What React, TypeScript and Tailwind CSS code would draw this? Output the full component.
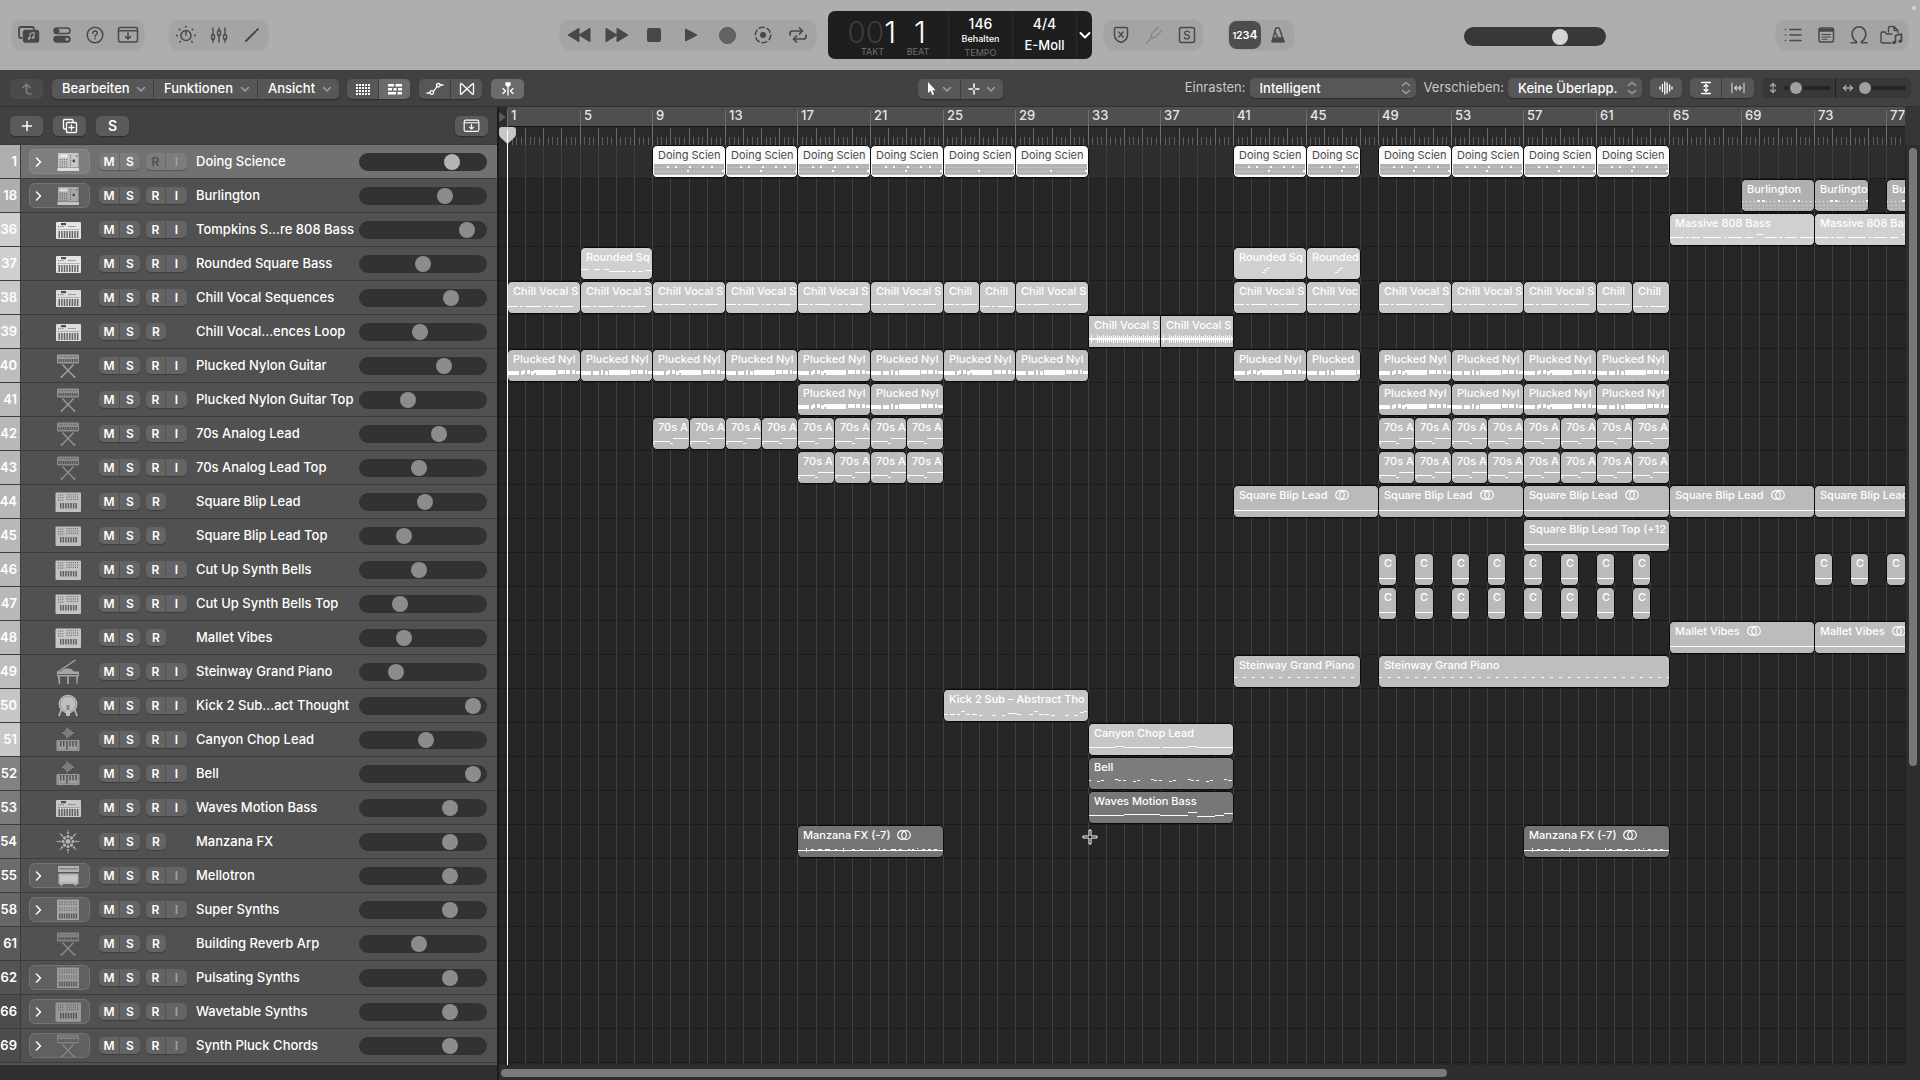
import React, { useState } from "react";

/* ---------- geometry of the time axis ---------- */

const BAR = 18.15;
const ORIGIN = 8;
const LAST_BAR = 78;
const barX = (bar: number) => Math.round(ORIGIN + (bar - 1) * BAR);

/* ---------- data ---------- */

type IconKind =
  | "mpc" | "keys" | "stand" | "synth" | "piano" | "kick"
  | "sampler" | "burst" | "mellotron" | "modular";

type Kind =
  | "drums" | "dots" | "massive" | "rounded" | "roundedUp" | "chill" | "chillLow"
  | "wave" | "pluck" | "seventies" | "line" | "piano" | "kick" | "canyon"
  | "bell" | "waves" | "fx";

type Region = { from: number; to: number; name: string; kind: Kind; stereo?: boolean };

type Track = {
  no: number; name: string; icon: IconKind; level: number;
  strip: string; tint: string; region: string;
  folder?: boolean; input?: "on" | "dim"; regions: Region[];
};

const run = (starts: number[], len: number, name: string, kind: Kind, stereo = false): Region[] =>
  starts.map((s) => ({ from: s, to: s + len, name, kind, stereo }));

const evens = (from: number, to: number) => {
  const out: number[] = [];
  for (let b = from; b <= to; b += 2) out.push(b);
  return out;
};

const TRACKS: Track[] = [
  { no: 1, name: "Doing Science", icon: "mpc", level: 85, strip: "bg-[#afafaf]", tint: "text-[#dedede]", region: "bg-[#fafafa] text-[#4a4a4a]", folder: true, input: "dim",
    regions: [...run([9, 13, 17, 21, 25, 29, 41], 4, "Doing Scien", "drums"), ...run([45], 3, "Doing Sc", "drums"), ...run([49, 53, 57, 61], 4, "Doing Scien", "drums")] },
  { no: 18, name: "Burlington", icon: "mpc", level: 78, strip: "bg-[#aeaeae]", tint: "text-[#c2c2c2]", region: "bg-[#b0b0b0] text-white", folder: true, input: "on",
    regions: [...run([69], 4, "Burlington", "dots"), ...run([73], 3, "Burlingto", "dots"), ...run([77], 4, "Burlington", "dots")] },
  { no: 36, name: "Tompkins S...re 808 Bass", icon: "keys", level: 100, strip: "bg-[#cfcfcf]", tint: "text-[#e4e4e4]", region: "bg-[#d0d0d0] text-white", input: "on",
    regions: run([65, 73], 8, "Massive 808 Bass", "massive") },
  { no: 37, name: "Rounded Square Bass", icon: "keys", level: 56, strip: "bg-[#cfcfcf]", tint: "text-[#e4e4e4]", region: "bg-[#d0d0d0] text-white", input: "on",
    regions: [...run([5], 4, "Rounded Sq", "rounded"), ...run([41], 4, "Rounded Sq", "roundedUp"), ...run([45], 3, "Rounded", "roundedUp")] },
  { no: 38, name: "Chill Vocal Sequences", icon: "keys", level: 84, strip: "bg-[#c8c8c8]", tint: "text-[#dcdcdc]", region: "bg-[#c8c8c8] text-white", input: "on",
    regions: [...run([1, 5], 4, "Chill Vocal S", "chillLow"), ...run([9, 13, 17, 21], 4, "Chill Vocal S", "chill"), ...run([25], 2, "Chill", "chill"), ...run([27], 2, "Chill", "chillLow"), ...run([29, 41], 4, "Chill Vocal S", "chill"), ...run([45], 3, "Chill Voc", "chill"), ...run([49, 53, 57], 4, "Chill Vocal S", "chill"), ...run([61], 2, "Chill", "chill"), ...run([63], 2, "Chill", "chillLow")] },
  { no: 39, name: "Chill Vocal...ences Loop", icon: "keys", level: 53, strip: "bg-[#c4c4c4]", tint: "text-[#dcdcdc]", region: "bg-[#c6c6c6] text-white",
    regions: run([33, 37], 4, "Chill Vocal S", "wave") },
  { no: 40, name: "Plucked Nylon Guitar", icon: "stand", level: 77, strip: "bg-[#bdbdbd]", tint: "text-[#a2a2a2]", region: "bg-[#bebebe] text-white", input: "on",
    regions: [...run([1, 5, 9, 13, 17, 21, 25, 29, 41], 4, "Plucked Nyl", "pluck"), ...run([45], 3, "Plucked", "pluck"), ...run([49, 53, 57, 61], 4, "Plucked Nyl", "pluck")] },
  { no: 41, name: "Plucked Nylon Guitar Top", icon: "stand", level: 41, strip: "bg-[#bababa]", tint: "text-[#989898]", region: "bg-[#bcbcbc] text-white", input: "on",
    regions: run([17, 21, 49, 53, 57, 61], 4, "Plucked Nyl", "pluck") },
  { no: 42, name: "70s Analog Lead", icon: "stand", level: 72, strip: "bg-[#b8b8b8]", tint: "text-[#949494]", region: "bg-[#bcbcbc] text-white", input: "on",
    regions: [...run(evens(9, 23), 2, "70s A", "seventies"), ...run(evens(49, 63), 2, "70s A", "seventies")] },
  { no: 43, name: "70s Analog Lead Top", icon: "stand", level: 52, strip: "bg-[#b8b8b8]", tint: "text-[#8e8e8e]", region: "bg-[#bcbcbc] text-white", input: "on",
    regions: [...run(evens(17, 23), 2, "70s A", "seventies"), ...run(evens(49, 63), 2, "70s A", "seventies")] },
  { no: 44, name: "Square Blip Lead", icon: "synth", level: 58, strip: "bg-[#b8b8b8]", tint: "text-[#c0c0c0]", region: "bg-[#bababa] text-white",
    regions: run([41, 49, 57, 65, 73], 8, "Square Blip Lead", "line", true) },
  { no: 45, name: "Square Blip Lead Top", icon: "synth", level: 37, strip: "bg-[#b8b8b8]", tint: "text-[#bebebe]", region: "bg-[#bcbcbc] text-white",
    regions: run([57], 8, "Square Blip Lead Top (+12", "line") },
  { no: 46, name: "Cut Up Synth Bells", icon: "synth", level: 52, strip: "bg-[#b8b8b8]", tint: "text-[#c2c2c2]", region: "bg-[#bababa] text-white", input: "on",
    regions: [...run(evens(49, 63), 1, "C", "line"), ...run([73, 75, 77], 1, "C", "line")] },
  { no: 47, name: "Cut Up Synth Bells Top", icon: "synth", level: 33, strip: "bg-[#b9b9b9]", tint: "text-[#c2c2c2]", region: "bg-[#bababa] text-white", input: "on",
    regions: run(evens(49, 63), 1, "C", "line") },
  { no: 48, name: "Mallet Vibes", icon: "synth", level: 37, strip: "bg-[#bababa]", tint: "text-[#c6c6c6]", region: "bg-[#bcbcbc] text-white",
    regions: run([65, 73], 8, "Mallet Vibes", "line", true) },
  { no: 49, name: "Steinway Grand Piano", icon: "piano", level: 29, strip: "bg-[#bebebe]", tint: "text-[#a6a6a6]", region: "bg-[#bebebe] text-white", input: "on",
    regions: [...run([41], 7, "Steinway Grand Piano", "piano"), ...run([49], 16, "Steinway Grand Piano", "piano")] },
  { no: 50, name: "Kick 2 Sub...act Thought", icon: "kick", level: 106, strip: "bg-[#c6c6c6]", tint: "text-[#c0c0c0]", region: "bg-[#c4c4c4] text-white", input: "on",
    regions: run([25], 8, "Kick 2 Sub – Abstract Tho", "kick") },
  { no: 51, name: "Canyon Chop Lead", icon: "sampler", level: 59, strip: "bg-[#c8c8c8]", tint: "text-[#a0a0a0]", region: "bg-[#c6c6c6] text-white", input: "on",
    regions: run([33], 8, "Canyon Chop Lead", "canyon") },
  { no: 52, name: "Bell", icon: "sampler", level: 106, strip: "bg-[#828282]", tint: "text-[#a0a0a0]", region: "bg-[#7c7c7c] text-white", input: "on",
    regions: run([33], 8, "Bell", "bell") },
  { no: 53, name: "Waves Motion Bass", icon: "keys", level: 83, strip: "bg-[#7c7c7c]", tint: "text-[#c8c8c8]", region: "bg-[#777777] text-white", input: "on",
    regions: run([33], 8, "Waves Motion Bass", "waves") },
  { no: 54, name: "Manzana FX", icon: "burst", level: 83, strip: "bg-[#737373]", tint: "text-[#b4b4b4]", region: "bg-[#747474] text-white",
    regions: run([17, 57], 8, "Manzana FX (-7)", "fx", true) },
  { no: 55, name: "Mellotron", icon: "mellotron", level: 83, strip: "bg-[#6c6c6c]", tint: "text-[#b4b4b4]", region: "", folder: true, input: "dim", regions: [] },
  { no: 58, name: "Super Synths", icon: "modular", level: 83, strip: "bg-[#676767]", tint: "text-[#a4a4a4]", region: "", folder: true, input: "dim", regions: [] },
  { no: 61, name: "Building Reverb Arp", icon: "stand", level: 52, strip: "bg-[#5a5a5a]", tint: "text-[#8a8a8a]", region: "", regions: [] },
  { no: 62, name: "Pulsating Synths", icon: "modular", level: 83, strip: "bg-[#545454]", tint: "text-[#9a9a9a]", region: "", folder: true, input: "dim", regions: [] },
  { no: 66, name: "Wavetable Synths", icon: "synth", level: 83, strip: "bg-[#4c4c4c]", tint: "text-[#989898]", region: "", folder: true, input: "dim", regions: [] },
  { no: 69, name: "Synth Pluck Chords", icon: "stand", level: 83, strip: "bg-[#4c4c4c]", tint: "text-[#848484]", region: "", folder: true, input: "dim", regions: [] },
];

/* ---------- instrument icons ---------- */

const DARK = "#4d4d4d";

function BlackKeys({ x, y, w, h, n }: { x: number; y: number; w: number; h: number; n: number }) {
  return (
    <>
      {Array.from({ length: n }, (_, i) => (
        <rect key={i} x={x + (i * w) / n} y={y} width={1.5} height={h} fill={DARK} opacity={0.85} />
      ))}
    </>
  );
}

function KnobGrid({ x, y, cols, rows, dx, dy }: { x: number; y: number; cols: number; rows: number; dx: number; dy: number }) {
  return (
    <>
      {Array.from({ length: cols * rows }, (_, i) => (
        <rect key={i} x={x + (i % cols) * dx} y={y + Math.floor(i / cols) * dy} width={1.1} height={1.2} fill={DARK} opacity={0.65} />
      ))}
    </>
  );
}

function InstrumentIcon({ kind }: { kind: IconKind }) {
  return (
    <svg viewBox="0 0 28 26" width={28} height={26} fill="currentColor" className="shrink-0" aria-hidden="true">
      {kind === "mpc" && (
        <>
          <rect x={4} y={4} width={20.5} height={14.5} rx={0.5} opacity={0.75} />
          <rect x={3.5} y={19} width={21.5} height={3} />
          <rect x={5.5} y={5.5} width={8} height={3} fill="#fff" opacity={0.6} />
          <KnobGrid x={5.5} y={10} cols={4} rows={4} dx={2.2} dy={2.2} />
          <KnobGrid x={16} y={6} cols={1} rows={5} dx={2} dy={2.4} />
          <circle cx={19.8} cy={12} r={1.4} fill={DARK} />
          <circle cx={22.6} cy={7} r={0.7} fill={DARK} />
        </>
      )}
      {kind === "keys" && (
        <>
          <rect x={2} y={5} width={25} height={17} rx={1} />
          <rect x={7} y={6} width={5} height={2.2} fill={DARK} />
          <KnobGrid x={4} y={9} cols={3} rows={1} dx={2.2} dy={2.2} />
          <rect x={14} y={9} width={8} height={0.9} fill={DARK} opacity={0.5} />
          <rect x={3.5} y={12} width={22} height={0.6} fill={DARK} opacity={0.5} />
          <BlackKeys x={4.5} y={14} w={21} h={7} n={8} />
        </>
      )}
      {kind === "stand" && (
        <>
          <rect x={3} y={1.5} width={22} height={9} rx={1} opacity={0.9} />
          <KnobGrid x={5} y={3} cols={8} rows={1} dx={2.4} dy={2} />
          <BlackKeys x={4.5} y={6} w={20} h={3} n={9} />
          <path d="M8.500 11.500 14 17.500l5.500-6M14 17.500 7.500 24M14 17.500l6.500 6.500" stroke="currentColor" strokeWidth={1.4} fill="none" />
          <rect x={6.5} y={23} width={2.5} height={1.5} />
          <rect x={19} y={23} width={2.5} height={1.5} />
        </>
      )}
      {kind === "synth" && (
        <>
          <rect x={1.5} y={3.5} width={25.5} height={19.5} rx={1} />
          <KnobGrid x={4} y={5.5} cols={3} rows={3} dx={2.1} dy={2.5} />
          <KnobGrid x={12.5} y={5} cols={6} rows={3} dx={2.1} dy={2.4} />
          <BlackKeys x={6} y={14} w={18} h={5.5} n={7} />
        </>
      )}
      {kind === "piano" && (
        <>
          <path d="M3 13.5 21.5 1" stroke="currentColor" strokeWidth={1.4} fill="none" />
          <path d="M7 12.5C9 10 11 9.5 14 9.5s5 1 5.500 3h5.500v5H3v-5z" />
          <rect x={4} y={15} width={20} height={0.8} fill={DARK} />
          <path d="M4 17.500h2v7.500H4.700zM13.200 17.500h1.800V25h-1.800zM22 17.500h2L23.500 25h-1z" />
        </>
      )}
      {kind === "kick" && (
        <>
          <circle cx={14} cy={11} r={9.3} />
          <path d="M7.500 16 5 23M20.500 16l2.500 7" stroke="currentColor" strokeWidth={1.600} />
          <circle cx={14} cy={11} r={7.8} fill="none" stroke={DARK} strokeWidth={0.6} opacity={0.6} />
          <rect x={12.500} y={12} width={3} height={7} fill={DARK} opacity={0.5} />
          <rect x={12} y={17} width={4} height={6} rx={1} />
        </>
      )}
      {kind === "sampler" && (
        <>
          <path d="M9 5v2M11 3.500v5M13 .5v11M15 2v8M17 3.500v5M19 5v2" stroke="currentColor" strokeWidth={1.100} />
          <rect x={2.500} y={13} width={23} height={11} rx={1} />
          <path d="M4 14.200h20v8.600H4z" fill="none" stroke={DARK} strokeWidth={0.5} opacity={0.6} />
          <path d="M6.700 14v5.500M9.700 14v5.500M13 14v8.500M16 14v5.500M19 14v5.500M22 14v5.500" stroke={DARK} strokeWidth={1.400} />
        </>
      )}
      {kind === "burst" && (
        <>
          <circle cx={14} cy={12.500} r={2.400} />
          {Array.from({ length: 8 }, (_, i) => (
            <g key={i} transform={`rotate(${i * 45} 14 12.500)`}>
              <circle cx={14} cy={7.500} r={1.600} />
              <circle cx={14} cy={4} r={1.100} />
              <circle cx={14} cy={1.700} r={0.700} />
            </g>
          ))}
        </>
      )}
      {kind === "mellotron" && (
        <>
          <path d="M4 3h21v6H4zM4.500 10h20v11H23l-.5 1.500h-2L20 21H9l-.5 1.500h-2L6 21H4.500z" />
          <rect x={5} y={5.300} width={19} height={1} fill={DARK} opacity={0.7} />
          <rect x={4} y={9} width={21} height={2} fill={DARK} opacity={0.45} />
          <rect x={6} y={12.500} width={17} height={6} fill="#fff" opacity={0.25} />
        </>
      )}
      {kind === "modular" && (
        <>
          <rect x={3} y={2.500} width={22} height={20.500} rx={0.500} />
          <KnobGrid x={5} y={4.500} cols={8} rows={2} dx={2.400} dy={2.200} />
          <KnobGrid x={5} y={10.500} cols={8} rows={2} dx={2.400} dy={2.200} />
          <BlackKeys x={5} y={16.500} w={19} h={5} n={8} />
        </>
      )}
    </svg>
  );
}

/* ---------- small shared pieces ---------- */

function Svg({ w = 20, h = 20, children, sw = 1.5 }: { w?: number; h?: number; children: React.ReactNode; sw?: number }) {
  return (
    <svg viewBox={`0 0 ${w} ${h}`} width={w} height={h} fill="none" stroke="currentColor" strokeWidth={sw} strokeLinecap="round" strokeLinejoin="round" aria-hidden="true">
      {children}
    </svg>
  );
}

function Chevron() {
  return (
    <Svg w={10} h={10}>
      <path d="M1.500 3.500 5 7l3.500-3.500" />
    </Svg>
  );
}

const GROUP = "flex h-[30px] items-center rounded-[10px] bg-[#a4a4a4] text-[#484848] shadow-[0_0_0_1px_#a9a9a9]";

function TopButton({ label, children, dim }: { label: string; children: React.ReactNode; dim?: boolean }) {
  return (
    <button type="button" aria-label={label} className={`flex h-full w-[33px] items-center justify-center ${dim ? "text-[#8a8a8a]" : ""}`}>
      {children}
    </button>
  );
}

function InboxIcon({ w = 22 }: { w?: number }) {
  return (
    <svg viewBox="0 0 22 18" width={w} height={(w * 18) / 22} fill="none" stroke="currentColor" strokeWidth={1.5} strokeLinecap="round" strokeLinejoin="round" aria-hidden="true">
      <rect x={1.500} y={1.500} width={19} height={14.500} rx={2} />
      <path d="M2 4.800h18M11 6.800v6M8.500 10.500l2.500 2.500 2.500-2.500" />
    </svg>
  );
}

/* ---------- control bar ---------- */

const TRANSPORT = [
  { label: "Zurückspulen", width: "w-[38px]", icon: <svg viewBox="0 0 24 16" width={24} height={16} fill="currentColor"><path d="M12 1.200v13.600L1 8zM23 1.200v13.600L12 8z" stroke="currentColor" strokeLinejoin="round" /></svg> },
  { label: "Vorspulen", width: "w-[38px]", icon: <svg viewBox="0 0 24 16" width={24} height={16} fill="currentColor"><path d="M12 1.200v13.600L23 8zM1 1.200v13.600L12 8z" stroke="currentColor" strokeLinejoin="round" /></svg> },
  { label: "Stopp", width: "w-9", icon: <span className="size-3.5 rounded-[2px] bg-current" /> },
  { label: "Wiedergabe", width: "w-[38px]", icon: <svg viewBox="0 0 14 14" width={14} height={14} fill="currentColor"><path d="M1.500 1v12L13 7z" stroke="currentColor" strokeLinejoin="round" /></svg> },
  { label: "Aufnahme", width: "w-[35px]", icon: <span className="size-[17px] rounded-full border border-[#565656] bg-[#646464]" /> },
  { label: "Aufnahme erfassen", width: "w-[35px]", icon: <Svg w={18} h={18}><circle cx={9} cy={9} r={7.700} strokeDasharray="5 3.060" /><circle cx={9} cy={9} r={3} fill="currentColor" stroke="none" /></Svg> },
  { label: "Cycle", width: "w-[35px]", icon: <Svg w={20} h={18} sw={1.700}><path d="M2 9V7.500Q2 5 4.500 5H14M11.500 2l3 3-3 3M18 9v1.500Q18 13 15.500 13H6M8.500 10l-3 3 3 3" /></Svg> },
];

function Transport() {
  return (
    <div className={`${GROUP} w-[256px]`}>
      {TRANSPORT.map(({ label, width, icon }) => (
        <button type="button" key={label} aria-label={label} className={`flex h-full items-center justify-center ${width}`}>
          {icon}
        </button>
      ))}
    </div>
  );
}

function Display() {
  return (
    <div className="flex h-12 w-[264px] overflow-hidden rounded-[7px] bg-[#1e1e1e] text-white">
      <div className="flex w-[120px] justify-end gap-2 pr-4 pt-1.5">
        <div className="flex w-[54px] flex-col items-end">
          <span className="text-[30px] font-light leading-[30px]"><span className="text-[#3c3c3c]">00</span>1</span>
          <span className="pr-3 text-[9px] leading-[10px] text-[#6e6e6e]">TAKT</span>
        </div>
        <div className="flex w-7 flex-col items-center">
          <span className="pl-1 text-[30px] font-light leading-[30px]">1</span>
          <span className="text-[9px] leading-[10px] text-[#6e6e6e]">BEAT</span>
        </div>
      </div>
      <div className="flex w-16 flex-col items-center border-l border-[#2b2b2b] pt-1">
        <span className="text-sm font-medium leading-[18px]">146</span>
        <span className="text-[9px] font-medium leading-3">Behalten</span>
        <span className="pt-0.5 text-[9px] leading-3 text-[#6e6e6e]">TEMPO</span>
      </div>
      <div className="flex w-16 flex-col items-center border-l border-[#2b2b2b] pt-1 font-medium">
        <span className="text-sm leading-[18px]">4/4</span>
        <span className="pt-0.5 text-[13px] leading-[20px]">E-Moll</span>
      </div>
      <button type="button" aria-label="Anzeigemodus" className="flex flex-1 items-center justify-center border-l border-[#2b2b2b]">
        <Svg w={12} h={12} sw={2}><path d="M1.500 4 6 8.500 10.500 4" /></Svg>
      </button>
    </div>
  );
}

function ControlBar() {
  const [volume, setVolume] = useState(87);
  return (
    <header className="relative grid h-[70px] grid-cols-[1fr_auto_1fr] items-start bg-[#aeaeae]">
      <div className="flex items-start pl-3 pr-3 pt-5">
        <div className={GROUP}>
          <TopButton label="Mediathek">
            <Svg w={24} h={20}>
              <path d="M4.500 13H4Q2 13 2 11V4Q2 2 4 2h11q2 0 2 2" strokeWidth={1.800} />
              <rect x={6.500} y={5.500} width={15} height={11.500} rx={2} fill="currentColor" />
              <path d="M13 13.500V8.500l4-1v5" stroke="#a4a4a4" strokeWidth={1.200} />
              <circle cx={12} cy={13.500} r={1.300} fill="#a4a4a4" stroke="none" />
              <circle cx={16} cy={12.600} r={1.300} fill="#a4a4a4" stroke="none" />
            </Svg>
          </TopButton>
          <TopButton label="Kurzinfo">
            <Svg w={20} h={18}>
              <rect x={2} y={2} width={16} height={5.500} rx={2.750} />
              <circle cx={5} cy={4.750} r={2.500} fill="currentColor" stroke="none" />
              <rect x={2} y={10.500} width={16} height={5.500} rx={2.750} fill="currentColor" />
              <circle cx={15} cy={13.250} r={1.600} fill="#a4a4a4" stroke="none" />
            </Svg>
          </TopButton>
          <TopButton label="Hilfe">
            <Svg w={20} h={20}>
              <circle cx={10} cy={10} r={7.800} />
              <path d="M7.900 8.200Q8 6 10.100 6t2.100 2q0 1.200-1.200 1.800-.9.500-.9 1.600M10.100 13.600v.1" />
            </Svg>
          </TopButton>
          <TopButton label="Werkzeugleiste"><InboxIcon /></TopButton>
        </div>
        <div className={`${GROUP} ml-[25px]`}>
          <TopButton label="Smart Controls">
            <Svg w={22} h={20}>
              <circle cx={11} cy={10.500} r={5} />
              <path d="M11 6v4" />
              {[[2, 10.500], [20, 10.500], [4.600, 4.500], [17.400, 4.500], [11, 1.800], [5, 16.800], [17, 16.800]].map(([x, y]) => (
                <circle key={`${x}-${y}`} cx={x} cy={y} r={1} fill="currentColor" stroke="none" />
              ))}
            </Svg>
          </TopButton>
          <TopButton label="Mixer">
            <Svg w={20} h={18} sw={1.400}>
              <path d="M4 2v6.500M4 13v3M10 2v2.500M10 9v7M16 2v6.500M16 13v3" />
              <rect x={2.500} y={8.500} width={3} height={5} rx={1.500} />
              <rect x={8.500} y={4.500} width={3} height={5} rx={1.500} />
              <rect x={14.500} y={8.500} width={3} height={5} rx={1.500} />
            </Svg>
          </TopButton>
          <TopButton label="Editoren">
            <Svg w={18} h={18} sw={2}><path d="m3 15 9.500-9.500M14 4l.8-.8" /></Svg>
          </TopButton>
        </div>
        <div className="ml-auto"><Transport /></div>
      </div>

      <div className="pt-[11px]"><Display /></div>

      <div className="flex items-start pl-3 pr-3 pt-5">
        <div className={GROUP}>
          <TopButton label="Ersetzen">
            <Svg w={18} h={20}>
              <path d="M4 2.500h10q1.500 0 1.500 1.500v6q0 5-6.500 7.500-6.500-2.500-6.500-7.500V4q0-1.500 1.500-1.500z" />
              <path d="m6.800 7 4.400 5M11.200 7l-4.400 5" strokeWidth={1.300} />
            </Svg>
          </TopButton>
          <TopButton label="Stimmgerät" dim>
            <Svg w={20} h={20} sw={1.600}><path d="m2.500 18 5-5.500M14 2 8.500 8Q6 10.500 7.500 12.300 9 14 12 11.500L18 5.500" /></Svg>
          </TopButton>
          <TopButton label="Solo">
            <Svg w={18} h={18}><rect x={1.500} y={1.500} width={15} height={15} rx={2} /><path d="M11.600 6.600Q11 5.200 9 5.200T6.600 7Q6.600 8.500 9 9t2.500 2q0 1.900-2.500 1.900T6.400 11.400" strokeWidth={1.300} /></Svg>
          </TopButton>
        </div>
        <div className={`${GROUP} ml-[25px] pl-px`}>
          <button type="button" aria-label="Vorzähler" className="flex h-7 w-8 items-center justify-center rounded-lg bg-[#4d4d4d] font-semibold text-white">
            <span className="flex items-baseline leading-4"><span className="text-[9px]">1</span><span className="text-[10px]">2</span><span className="text-[11px]">3</span><span className="text-[12px]">4</span></span>
          </button>
          <TopButton label="Metronom">
            <Svg w={18} h={18} sw={1.400}><path d="M6.800 2h3.400L15 15.800H3zM4.300 12h9.400M9 12 5.500 5" /><path d="M4 13h10l.8 2.500H3.200z" fill="currentColor" /></Svg>
          </TopButton>
        </div>
        <div className="flex flex-1 justify-center pt-[7px]">
          <input
            type="range" min={0} max={124} value={volume} aria-label="Gesamtlautstärke"
            onChange={(e) => setVolume(Number(e.target.value))}
            className="h-[19px] w-[142px] appearance-none rounded-full bg-[#383838] px-px [&::-webkit-slider-thumb]:size-4 [&::-webkit-slider-thumb]:appearance-none [&::-webkit-slider-thumb]:rounded-full [&::-webkit-slider-thumb]:bg-[#d4d4d4]"
          />
        </div>
        <div className={GROUP}>
          <TopButton label="Listeneditoren">
            <Svg w={20} h={18} sw={1.600}><path d="M7 3.500h11M7 9h11M7 14.500h11M2.500 3.500h.1M2.500 9h.1M2.500 14.500h.1" /></Svg>
          </TopButton>
          <TopButton label="Notizblöcke">
            <Svg w={18} h={18}><rect x={2} y={2} width={14.500} height={14} rx={2} /><path d="M2.500 3.500h13.500v1.500H2.500z" fill="currentColor" /><path d="M5 8.500h8.500M5 11h8.500M5 13.300h5" strokeWidth={1.100} /></Svg>
          </TopButton>
          <TopButton label="Loops">
            <Svg w={20} h={20} sw={1.600}><path d="M2 17.800h4.500q1.800 0 .8-1.300C4.500 14.500 3.200 12.500 3.200 9a6.800 7.300 0 0 1 13.600 0c0 3.500-1.300 5.500-4.100 7.500Q11.700 17.800 13.500 17.800H18" /></Svg>
          </TopButton>
          <TopButton label="Browser">
            <Svg w={26} h={22} sw={1.400}>
              <path d="M9.500 8V4q0-1.500 1.500-1.500h4l4 4V9M15 2.500v4h4" />
              <path d="M12 19H3.500Q2 19 2 17.500V9.500Q2 8 3.500 8H6l1.500 2h5.500" />
              <path d="M16.500 18.500v-7l6-1.500v7" strokeWidth={1.700} />
              <circle cx={15} cy={18.500} r={1.700} fill="currentColor" stroke="none" /><circle cx={21} cy={17.200} r={1.700} fill="currentColor" stroke="none" />
            </Svg>
          </TopButton>
        </div>
      </div>
      <span className="absolute right-1 top-1.5 size-1 rounded-full bg-[#d4d4d4]" />
    </header>
  );
}

/* ---------- arrangement toolbar ---------- */

const TB = "flex h-5 items-center rounded-[5px] bg-[#575757] text-white shadow-[0_1px_1px_#2e2e2e]";

function MenuButton({ label, width }: { label: string; width: string }) {
  return (
    <button type="button" className={`flex h-full items-center justify-between pl-2.5 pr-[7px] text-[13px] font-medium ${width}`}>
      {label}
      <span className="text-[#a0a0a0]"><Chevron /></span>
    </button>
  );
}

function PopUp({ id, label, options, width }: { id: string; label: string; options: string[]; width: string }) {
  return (
    <>
      <label htmlFor={id} className="mr-1 text-[13px] text-[#c8c8c8]">{label}</label>
      <div className={`relative mr-2 ${width}`}>
        <select id={id} className="block h-5 w-full appearance-none rounded-[5px] bg-[#575757] pb-px pl-2.5 pr-5 text-[13px] font-medium leading-4 text-white shadow-[0_1px_1px_#2e2e2e]">
          {options.map((o) => <option key={o}>{o}</option>)}
        </select>
        <span className="pointer-events-none absolute right-[5px] top-[3px] text-[#a0a0a0]">
          <Svg w={10} h={14}><path d="M1.500 4.500 5 1.500l3.500 3M1.500 9.500l3.500 3 3.500-3" /></Svg>
        </span>
      </div>
    </>
  );
}

function ZoomSlider({ label, value, width }: { label: string; value: number; width: string }) {
  return (
    <input
      type="range" aria-label={label} min={0} max={100} defaultValue={value}
      className={`h-3 appearance-none bg-transparent ${width} [&::-webkit-slider-runnable-track]:h-1 [&::-webkit-slider-runnable-track]:rounded-full [&::-webkit-slider-runnable-track]:bg-[#262626] [&::-webkit-slider-thumb]:-mt-1 [&::-webkit-slider-thumb]:size-3 [&::-webkit-slider-thumb]:appearance-none [&::-webkit-slider-thumb]:rounded-full [&::-webkit-slider-thumb]:bg-[#a0a0a0]`}
    />
  );
}

function Toolbar() {
  return (
    <div className="grid h-[37px] grid-cols-[1fr_auto_1fr] items-center border-b border-[#303030] bg-[#414141]">
      <div className="flex pl-2.5 pt-0.5">
        <button type="button" aria-label="Ebene nach oben" className="flex h-5 w-[33px] items-center justify-center rounded-[5px] bg-[#4b4b4b] text-[#808080]">
          <Svg w={14} h={16}><path d="M3 6.500 6.500 3 10 6.500M6.500 3v7.500q0 2.500 4.500 2.500" /></Svg>
        </button>
        <div className={`${TB} ml-[9px] divide-x divide-[#404040]`}>
          <MenuButton label="Bearbeiten" width="w-[102px]" />
          <MenuButton label="Funktionen" width="w-[104px]" />
          <MenuButton label="Ansicht" width="w-[81px]" />
        </div>
        <div className={`${TB} ml-2 divide-x divide-[#404040] overflow-hidden`}>
          <button type="button" aria-label="Live Loops" className="flex h-full w-8 items-center justify-center">
            <svg viewBox="0 0 14 12" width={14} height={12} fill="currentColor">
              {Array.from({ length: 20 }, (_, i) => <rect key={i} x={(i % 5) * 3} y={1 + Math.floor(i / 5) * 3} width={2} height={2} />)}
            </svg>
          </button>
          <button type="button" aria-label="Spuren" aria-pressed="true" className="flex h-full w-[31px] items-center justify-center bg-[#6c6c6c]">
            <svg viewBox="0 0 14 12" width={14} height={12} fill="currentColor">
              <path d="M0 1h6v2.500H0zM7.500 1H14v2.500H7.500zM0 5h4v2.500H0zM5.500 5h3v2.500h-3zM10 5h4v2.500h-4zM0 9h8v2.500H0zM9.500 9H14v2.500H9.500z" />
            </svg>
          </button>
        </div>
        <div className={`${TB} ml-[9px] divide-x divide-[#404040]`}>
          <button type="button" aria-label="Automation" className="flex h-full w-8 items-center justify-center">
            <Svg w={18} h={14} sw={1.300}><path d="M1 11h3M7.500 9.500l3.500-5M14.500 3H17" /><circle cx={5.800} cy={10.500} r={1.800} /><circle cx={12.300} cy={3.300} r={1.800} /></Svg>
          </button>
          <button type="button" aria-label="Flex" className="flex h-full w-[31px] items-center justify-center">
            <Svg w={16} h={14} sw={1.300}><path d="M1.500 2.500v9Q1.500 13 3 11.500L13 2.200q1.500-1.200 1.500.5v8.600q0 1.700-1.500.5L3 2Q1.500.8 1.500 2.500z" /></Svg>
          </button>
        </div>
        <button type="button" aria-label="Abspielposition mitführen" aria-pressed="true" className="ml-[9px] flex h-5 w-[33px] items-center justify-center rounded-[5px] bg-[#6c6c6c] text-white">
          <Svg w={14} h={14} sw={1.300}><path d="M7 4v9M2 6.500 4.500 9 2 11.500M12 6.500 9.500 9l2.500 2.500" /><path d="M5 1h4v2L7 4.500 5 3z" fill="currentColor" /></Svg>
        </button>
      </div>

      <div className="pt-0.5">
        <div className={`${TB} divide-x divide-[#404040]`}>
          <button type="button" aria-label="Zeigerwerkzeug" className="flex h-full w-[43px] items-center justify-center gap-1.5">
            <svg viewBox="0 0 10 14" width={10} height={14} fill="currentColor"><path d="M2 0v11l2.500-2.200L6.300 13l1.800-.8-1.800-4H9.500z" /></svg>
            <span className="text-[#a0a0a0]"><Chevron /></span>
          </button>
          <button type="button" aria-label="Befehlstaste-Werkzeug" className="flex h-full w-[42px] items-center justify-center gap-1.5">
            <Svg w={12} h={12}><path d="M6 1v3.500M6 7.500V11M1 6h3.500M7.500 6H11" /></Svg>
            <span className="text-[#a0a0a0]"><Chevron /></span>
          </button>
        </div>
      </div>

      <div className="flex items-center justify-end pr-[9px]">
        <PopUp id="snap" label="Einrasten:" options={["Intelligent", "Takt", "Beat"]} width="w-[166px]" />
        <PopUp id="drag" label="Verschieben:" options={["Keine Überlapp.", "Überlappen"]} width="w-[134px]" />
        <button type="button" aria-label="Wellenform-Zoom" className={`${TB} w-8 justify-center`}>
          <Svg w={16} h={16} sw={1.300}><path d="M2 7v2M4.400 4.500v7M6.800 2v12M9.200 3v10M11.600 5v6M14 7v2" /></Svg>
        </button>
        <div className={`${TB} ml-2 divide-x divide-[#404040]`}>
          <button type="button" aria-label="Vertikal einpassen" className="flex h-full w-8 items-center justify-center">
            <Svg w={14} h={14} sw={1.300}><path d="M2.500 1.500h9M2.500 12.500h9M7 4v6M5 5.500l2-2 2 2M5 8.500l2 2 2-2" /></Svg>
          </button>
          <button type="button" aria-label="Horizontal einpassen" className="flex h-full w-8 items-center justify-center text-[#c4c4c4]">
            <Svg w={14} h={14} sw={1.300}><path d="M1 2.500v9M13 2.500v9M4 7h6M5.500 5l-2 2 2 2M8.500 5l2 2-2 2" /></Svg>
          </button>
        </div>
        <div className="ml-2 flex h-5 items-center divide-x divide-[#222] rounded-[5px] bg-[#383838] text-[#a8a8a8]">
          <div className="flex h-full w-[74px] items-center justify-center gap-1">
            <Svg w={12} h={12} sw={1.300}><path d="M6 1.500v9M3.500 4 6 1.500 8.500 4M3.500 8 6 10.500 8.500 8" /></Svg>
            <ZoomSlider label="Vertikaler Zoom" value={21} width="w-[48px]" />
          </div>
          <div className="flex h-full w-[75px] items-center justify-center gap-1">
            <Svg w={12} h={12} sw={1.300}><path d="M1.500 6h9M4 3.500 1.500 6 4 8.500M8 3.500 10.500 6 8 8.500" /></Svg>
            <ZoomSlider label="Horizontaler Zoom" value={3} width="w-[48px]" />
          </div>
        </div>
      </div>
    </div>
  );
}

/* ---------- track list ---------- */

const HDR_BTN = "flex h-5 w-[33px] items-center justify-center rounded-[5px] bg-[#5a5a5a] text-white shadow-[0_1px_1px_#2e2e2e]";

function TrackListHeader() {
  return (
    <div className="flex h-[38px] items-center gap-2.5 border-b border-[#3a3a3a] bg-[#414141] pl-2.5 pr-[9px]">
      <button type="button" aria-label="Neue Spur" className={HDR_BTN}>
        <Svg w={12} h={12}><path d="M6 1.500v9M1.500 6h9" /></Svg>
      </button>
      <button type="button" aria-label="Spur duplizieren" className={HDR_BTN}>
        <Svg w={16} h={16} sw={1.300}><path d="M4 11H2.500Q1.500 11 1.500 10V2.500q0-1 1-1H10q1 0 1 1V4" /><rect x={4.500} y={4.500} width={10} height={10} rx={1} /><path d="M9.500 7v5M7 9.500h5" /></Svg>
      </button>
      <button type="button" aria-label="Solo" className={`${HDR_BTN} text-sm font-semibold`}>S</button>
      <button type="button" aria-label="Globale Spuren" className={`${HDR_BTN} ml-auto`}><InboxIcon w={17} /></button>
    </div>
  );
}

function TrackRow({ track, selected }: { track: Track; selected: boolean }) {
  const [level, setLevel] = useState(track.level);
  const pad = selected ? "bg-[#7c7c7c]" : "bg-[#646464]";
  const edge = selected ? "divide-[#686868]" : "divide-[#515151]";
  const pair = `flex h-[17px] divide-x overflow-hidden rounded-[5px] text-xs font-semibold text-white shadow-[0_1px_1px_#00000040] ${pad} ${edge}`;
  return (
    <li className={`flex h-[34px] items-center border-b border-[#3c3c3c] ${selected ? "bg-[#717171]" : "bg-[#515151]"}`}>
      <span className={`flex h-full w-[21px] shrink-0 items-center justify-end border-r border-[#3c3c3c] pr-[3px] text-[13px] font-semibold text-white ${track.strip}`}>
        {track.no}
      </span>
      <div className="w-[78px] shrink-0 pl-2">
        {track.folder ? (
          <button
            type="button" aria-label={`${track.name} aufklappen`}
            className={`flex h-[25px] w-[61px] items-center overflow-hidden rounded-md border pl-1 ${track.tint} ${selected ? "border-[#8a8a8a] bg-[#7e7e7e]" : "border-[#737373] bg-[#606060]"}`}
          >
            <span className="mr-2.5 text-white"><Svg w={10} h={10}><path d="m2.500 1 4 4-4 4" /></Svg></span>
            <InstrumentIcon kind={track.icon} />
          </button>
        ) : (
          <div className={`pl-[25px] ${track.tint}`}><InstrumentIcon kind={track.icon} /></div>
        )}
      </div>
      <div className={pair}>
        <button type="button" aria-label={`${track.name} stumm`} className="w-[21px]">M</button>
        <button type="button" aria-label={`${track.name} solo`} className="w-5">S</button>
      </div>
      <div className="ml-1.5 w-[50px]">
        <div className={`${pair} w-fit`}>
          <button type="button" aria-label={`${track.name} Aufnahme`} className={`w-5 ${selected ? "text-[#505050]" : ""}`}>R</button>
          {track.input && (
            <button type="button" aria-label={`${track.name} Eingang`} className={`w-[21px] ${track.input === "dim" ? "text-[#a2a2a2]" : ""}`}>I</button>
          )}
        </div>
      </div>
      <span className="w-[163px] whitespace-nowrap text-[13px] font-medium text-white">{track.name}</span>
      <input
        type="range" min={0} max={112} value={level} aria-label={`${track.name} Lautstärke`}
        onChange={(e) => setLevel(Number(e.target.value))}
        className={`mr-2.5 h-[18px] w-[128px] appearance-none rounded-full bg-[#323232] [&::-webkit-slider-thumb]:size-4 [&::-webkit-slider-thumb]:appearance-none [&::-webkit-slider-thumb]:rounded-full ${selected ? "[&::-webkit-slider-thumb]:bg-[#b4b4b4]" : "[&::-webkit-slider-thumb]:bg-[#8c8c8c]"}`}
      />
    </li>
  );
}

/* ---------- timeline ---------- */

function Ruler() {
  const bars = Array.from({ length: LAST_BAR }, (_, i) => i + 1);
  return (
    <div className="flex h-[38px] bg-[#2a2a2a]">
      <div className="relative flex-1 overflow-hidden">
        <div className="h-5 border-b border-[#161616] bg-[#4f4f4f]" />
        <div className="absolute left-0 top-0 flex h-5 w-2 items-center bg-[#2c2c2c] text-[#5a5a5a]">
          <svg viewBox="0 0 8 10" width={8} height={10} fill="currentColor"><path d="M0 0v10l7-5z" /></svg>
        </div>
        {bars.map((bar) => (
          <React.Fragment key={bar}>
            {(bar - 1) % 4 === 0 ? (
              <>
                <i className="absolute top-[3px] h-[35px] w-px bg-[#6f6f6f]" style={{ left: barX(bar) }} />
                <span className="absolute top-0 pl-1 text-[13px] font-medium leading-4 text-[#e6e6e6]" style={{ left: barX(bar) }}>{bar}</span>
              </>
            ) : (
              <i className="absolute bottom-0 h-[17px] w-px bg-[#6a6a6a]" style={{ left: barX(bar) }} />
            )}
            {[0.25, 0.5, 0.75].map((q) => (
              <i key={q} className="absolute bottom-0 h-2 w-px bg-[#5e5e5e]" style={{ left: barX(bar + q) }} />
            ))}
          </React.Fragment>
        ))}
      </div>
      <div className="w-[15px] bg-[#363636]" />
    </div>
  );
}

type Note = [number, number, number, number?];

const tile = (notes: Note[], period: number, width: number): Note[] => {
  const out: Note[] = [];
  for (let o = 0; o < width; o += period) notes.forEach(([x, y, w, h]) => out.push([x + o, y, w, h]));
  return out;
};

function notesFor(kind: Kind, w: number, from: number): Note[] {
  switch (kind) {
    case "drums":
      return from === 25 || from === 29
        ? [[34, 24, 2, 2], [69, 24, 2, 2]]
        : [[14, 20, 2, 2], [22, 20, 2, 2], [36, 20, 2, 2], [49, 20, 2, 2], [58, 20, 2, 2], [34, 24, 2, 2], [69, 24, 2, 2]];
    case "dots":
      return [...tile([[0, 21, 1]], 4, w), [15, 20, 3, 2], [20, 20, 3, 2], [36, 20, 2, 2], [51, 20, 2, 2], [56, 20, 2, 2]];
    case "massive":
      return [[0, 23, 14], [16, 23, 3], [21, 23, 9], [33, 23, 18], [54, 23, 2], [58, 23, 14], [75, 23, 8], [87, 20, 7], [95, 23, 12], [109, 23, 3], [115, 23, 12], [130, 23, 13]];
    case "rounded":
      return [[0, 21, 8], [13, 21, 6], [23, 21, 5], [28, 23, 17], [47, 23, 2], [51, 23, 4], [57, 23, 5], [64, 22, 7]];
    case "roundedUp":
      return [[28, 24, 3], [30, 22, 3], [32, 20, 3], [35, 19, 1]];
    case "chill":
      return [[0, 22, 10], [12, 22, 3], [17, 22, 16], [36, 22, 2], [40, 22, 5], [47, 22, 3], [52, 22, 13]];
    case "chillLow":
      return [[0, 24, 10], [12, 24, 3], [17, 24, 16], [36, 24, 2], [40, 24, 5], [47, 24, 3], [52, 24, 13]];
    case "pluck":
      return from % 8 === 1
        ? [[0, 21, 11, 4], [13, 21, 2, 4], [15, 20, 2, 4], [19, 20, 3, 4], [23, 21, 3, 4], [26, 20, 2, 3], [28, 20, 20, 5], [50, 20, 7, 4], [58, 20, 4, 4], [64, 20, 3, 4], [68, 21, 4, 3]]
        : [[0, 21, 10, 4], [12, 21, 6, 4], [20, 20, 2, 5], [24, 21, 3, 4], [28, 20, 21, 5], [50, 20, 6, 4], [57, 20, 5, 4], [64, 20, 2, 4], [67, 21, 5, 3]];
    case "seventies":
      return [[0, 23, 17], [0, 25, 2], [17, 25, 3], [20, 20, 16]];
    case "line":
      return [[0, 24, w]];
    case "piano":
      return tile([[0, 21, 3]], 9, w);
    case "kick":
      return [[0, 24, 4], [6, 24, 5], [13, 24, 3], [17, 21, 4], [22, 24, 4], [28, 24, 5], [35, 25, 3], [48, 25, 4], [58, 25, 3], [64, 23, 9], [73, 24, 4], [85, 24, 4], [90, 21, 4], [95, 24, 5], [101, 24, 4], [107, 25, 4], [121, 25, 4], [130, 25, 4], [136, 22, 4], [140, 21, 3]];
    case "canyon":
      return [[0, 23, 26], [26, 22, 9], [35, 23, 36], [73, 23, 26], [99, 22, 9], [108, 23, 36]];
    case "bell":
      return [[0, 22, 2], [8, 23, 3], [12, 22, 3], [26, 21, 3], [29, 22, 3], [34, 22, 3], [44, 23, 3], [48, 22, 3], [62, 21, 3], [65, 22, 3], [70, 22, 3], [80, 23, 3], [84, 22, 3], [99, 21, 3], [102, 22, 3], [107, 22, 3], [117, 23, 3], [121, 22, 3], [135, 21, 3], [139, 22, 4]];
    case "waves":
      return [[0, 23, 35], [35, 22, 36], [71, 23, 28], [99, 20, 9], [108, 24, 18], [126, 23, 9], [135, 21, 9]];
    case "fx":
      return [[0, 24, w], [8, 22, 1, 4], [13, 23, 3], [20, 23, 4], [27, 23, 5], [37, 23, 2], [45, 22, 1, 4], [54, 23, 3], [62, 23, 3], [81, 22, 1, 3], [85, 23, 3], [93, 23, 5], [101, 23, 3], [110, 23, 2], [114, 23, 2], [119, 22, 1], [124, 23, 3], [130, 23, 3], [136, 23, 3]];
    case "wave":
      return Array.from({ length: Math.floor(w / 2) }, (_, i): Note => {
        const a = i === 1 ? 4 : i < 4 ? 1 : 3 + ((i * 7) % 5 > 2 ? 1 : 0);
        return [i * 2, 23 - a, 1, a * 2];
      }).concat([[0, 22, w, 2]]);
  }
}

function RegionBlock({ region, tone }: { region: Region; tone: string }) {
  const left = barX(region.from);
  const width = barX(region.to) - left + 1;
  const inner = width - 2;
  const drums = region.kind === "drums";
  return (
    <div
      className={`absolute top-0 h-[33px] overflow-hidden border border-[#0c0c0c] ${region.kind === "wave" ? "" : "rounded-[5px]"} ${tone}`}
      style={{ left, width }}
    >
      <svg className="absolute inset-0" viewBox={`0 0 ${inner} 31`} width={inner} height={31} shapeRendering="crispEdges" aria-hidden="true">
        {drums && (
          <>
            <rect x={1} y={18} width={inner - 2} height={11} fill="#b2b2b2" />
            <path d={`M1 21.500h${inner - 2}M1 25.500h${inner - 2}M1 28.500h${inner - 2}`} stroke="#c4c4c4" strokeWidth={1} strokeDasharray="2 1" />
          </>
        )}
        {region.kind === "dots" && (
          <path d={`M0 25.500h${inner}M0 28.500h${inner}`} stroke="#c6c6c6" strokeWidth={1} strokeDasharray="2 2" />
        )}
        {notesFor(region.kind, inner, region.from).map(([x, y, w, h], i) => (
          <rect key={i} x={x} y={y} width={w} height={h ?? 1} fill="#fdfdfd" />
        ))}
      </svg>
      <div className="relative flex items-center gap-[7px] whitespace-nowrap pl-[5px] pt-0.5 text-[11px] font-medium leading-[14px]">
        <span className={drums ? "font-normal" : ""}>{region.name}</span>
        {region.stereo && (
          <Svg w={14} h={10} sw={1.200}><circle cx={5} cy={5} r={4.300} /><circle cx={9} cy={5} r={4.300} /></Svg>
        )}
      </div>
    </div>
  );
}

function Timeline() {
  const bars = Array.from({ length: LAST_BAR }, (_, i) => i + 1);
  return (
    <div className="flex flex-1">
      <div className="relative flex-1 overflow-hidden bg-[#262626] pb-0.5">
        {TRACKS.map((t, i) => (
          <div key={t.no} className={`h-[34px] border-b border-[#1b1b1b] ${i === 0 ? "bg-[#2d2d2d]" : ""}`} />
        ))}
        {bars.map((bar) => (
          <i key={bar} className="absolute inset-y-0 w-px bg-[#404040]" style={{ left: barX(bar) }} />
        ))}
        <div className="absolute inset-x-0 top-0">
          {TRACKS.map((t) => (
            <div key={t.no} className="relative h-[34px]">
              {t.regions.map((r) => <RegionBlock key={r.from} region={r} tone={t.region} />)}
            </div>
          ))}
        </div>
        <svg className="absolute left-[583px] top-[684px]" viewBox="0 0 16 16" width={16} height={16} aria-hidden="true">
          <path d="M7 1h2v6h6v2H9v6H7V9H1V7h6z" fill="#111" stroke="#fff" strokeWidth={1} />
        </svg>
      </div>
      <div className="w-[15px] border-l border-[#222] bg-[#2e2e2e] pl-[3px] pt-[3px]">
        <div className="h-[618px] w-2 rounded-full bg-[#777]" />
      </div>
    </div>
  );
}

export default function App() {
  return (
    <main className="flex min-h-screen flex-col overflow-hidden bg-[#2e2e2e] font-['Inter','Liberation_Sans',sans-serif]">
      <ControlBar />
      <Toolbar />
      <div className="flex flex-1">
        <section aria-label="Spuren" className="flex w-[499px] shrink-0 flex-col border-r-2 border-[#1c1c1c]">
          <TrackListHeader />
          <ul className="border-b-2 border-[#515151]">
            {TRACKS.map((t, i) => <TrackRow key={t.no} track={t} selected={i === 0} />)}
          </ul>
          <div className="min-h-[15px] flex-1 bg-[#2f2f2f]" />
        </section>
        <section aria-label="Arrangement" className="relative flex min-w-0 flex-1 flex-col">
          <Ruler />
          <Timeline />
          <div className="h-[15px] bg-[#2e2e2e] pl-0.5 pt-1">
            <div className="h-2 w-2/3 rounded-full bg-[#7a7a7a]" />
          </div>
          <div className="pointer-events-none absolute bottom-[15px] left-0 top-5 flex w-[17px] flex-col items-center text-[#c6c6c6]">
            <svg viewBox="0 0 17 17" width={17} height={17} fill="currentColor" aria-hidden="true">
              <path d="M3 0h11q3 0 3 3v4q0 2-2 4l-6.500 6L2 11Q0 9 0 7V3q0-3 3-3z" />
            </svg>
            <span className="-mt-3.5 w-px flex-1 bg-white" />
          </div>
        </section>
      </div>
    </main>
  );
}
